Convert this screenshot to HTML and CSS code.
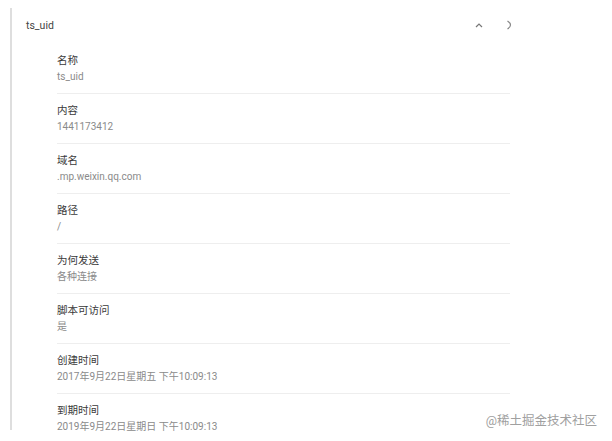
FILE: index.html
```html
<!DOCTYPE html>
<html lang="zh">
<head>
<meta charset="utf-8">
<link rel="stylesheet" href="styles.css">
</head>
<body>
<div class="panel">
  <div class="header">
    <span class="title">ts_uid</span>
    <div class="actions">
      <svg class="ico up" width="10" height="8" viewBox="0 0 10 8"><path d="M2 6 L5 3 L8 6" fill="none" stroke="#777" stroke-width="1.2"/></svg>
      <svg class="ico right" width="8" height="12" viewBox="0 0 8 12"><path d="M2.5 2 Q5.5 4 5.5 6 Q5.5 8 2.5 10" fill="none" stroke="#888" stroke-width="1.2"/></svg>
    </div>
  </div>
  <div class="list">
    <div class="row"><div class="label">名称</div><div class="value">ts_uid</div></div>
    <div class="row"><div class="label">内容</div><div class="value">1441173412</div></div>
    <div class="row"><div class="label">域名</div><div class="value">.mp.weixin.qq.com</div></div>
    <div class="row"><div class="label">路径</div><div class="value">/</div></div>
    <div class="row"><div class="label">为何发送</div><div class="value">各种连接</div></div>
    <div class="row"><div class="label">脚本可访问</div><div class="value">是</div></div>
    <div class="row"><div class="label">创建时间</div><div class="value">2017年9月22日星期五 下午10:09:13</div></div>
    <div class="row"><div class="label">到期时间</div><div class="value">2019年9月22日星期日 下午10:09:13</div></div>
  </div>
</div>
<div class="watermark">@稀土掘金技术社区</div>
</body>
</html>
```
FILE: styles.css
```css
html, body {
  margin: 0;
  padding: 0;
  background: #fff;
}
body {
  font-family: Roboto, "Noto Sans CJK SC", sans-serif;
  color: #333;
  width: 612px;
  height: 441px;
  overflow: hidden;
  position: relative;
}
.panel {
  margin: 8px 0 0 10px;
  height: 422px;
  border-left: 2px solid #dedede;
  width: 520px;
}
.header {
  height: 34px;
  display: flex;
  align-items: center;
  padding-left: 14px;
}
.title {
  font-size: 10.5px;
  color: #444;
  flex: 1;
}
.actions {
  display: flex;
  align-items: center;
  gap: 21px;
  margin-right: 19px;
}
.ico {
  display: block;
}
.list {
  margin-top: 2px;
  margin-left: 45px;
  width: 453px;
}
.row {
  border-bottom: 1px solid #eeeeee;
  padding-top: 10px;
  box-sizing: content-box;
  height: 39px;
}
.label {
  font-size: 10.5px;
  line-height: 14px;
  color: #3a3a3a;
}
.value {
  font-size: 10px;
  line-height: 14px;
  margin-top: 2px;
  color: #8a8a8a;
}
.watermark {
  position: absolute;
  right: 15px;
  bottom: 12px;
  font-size: 12.5px;
  color: #a0a0a0;
}
```
